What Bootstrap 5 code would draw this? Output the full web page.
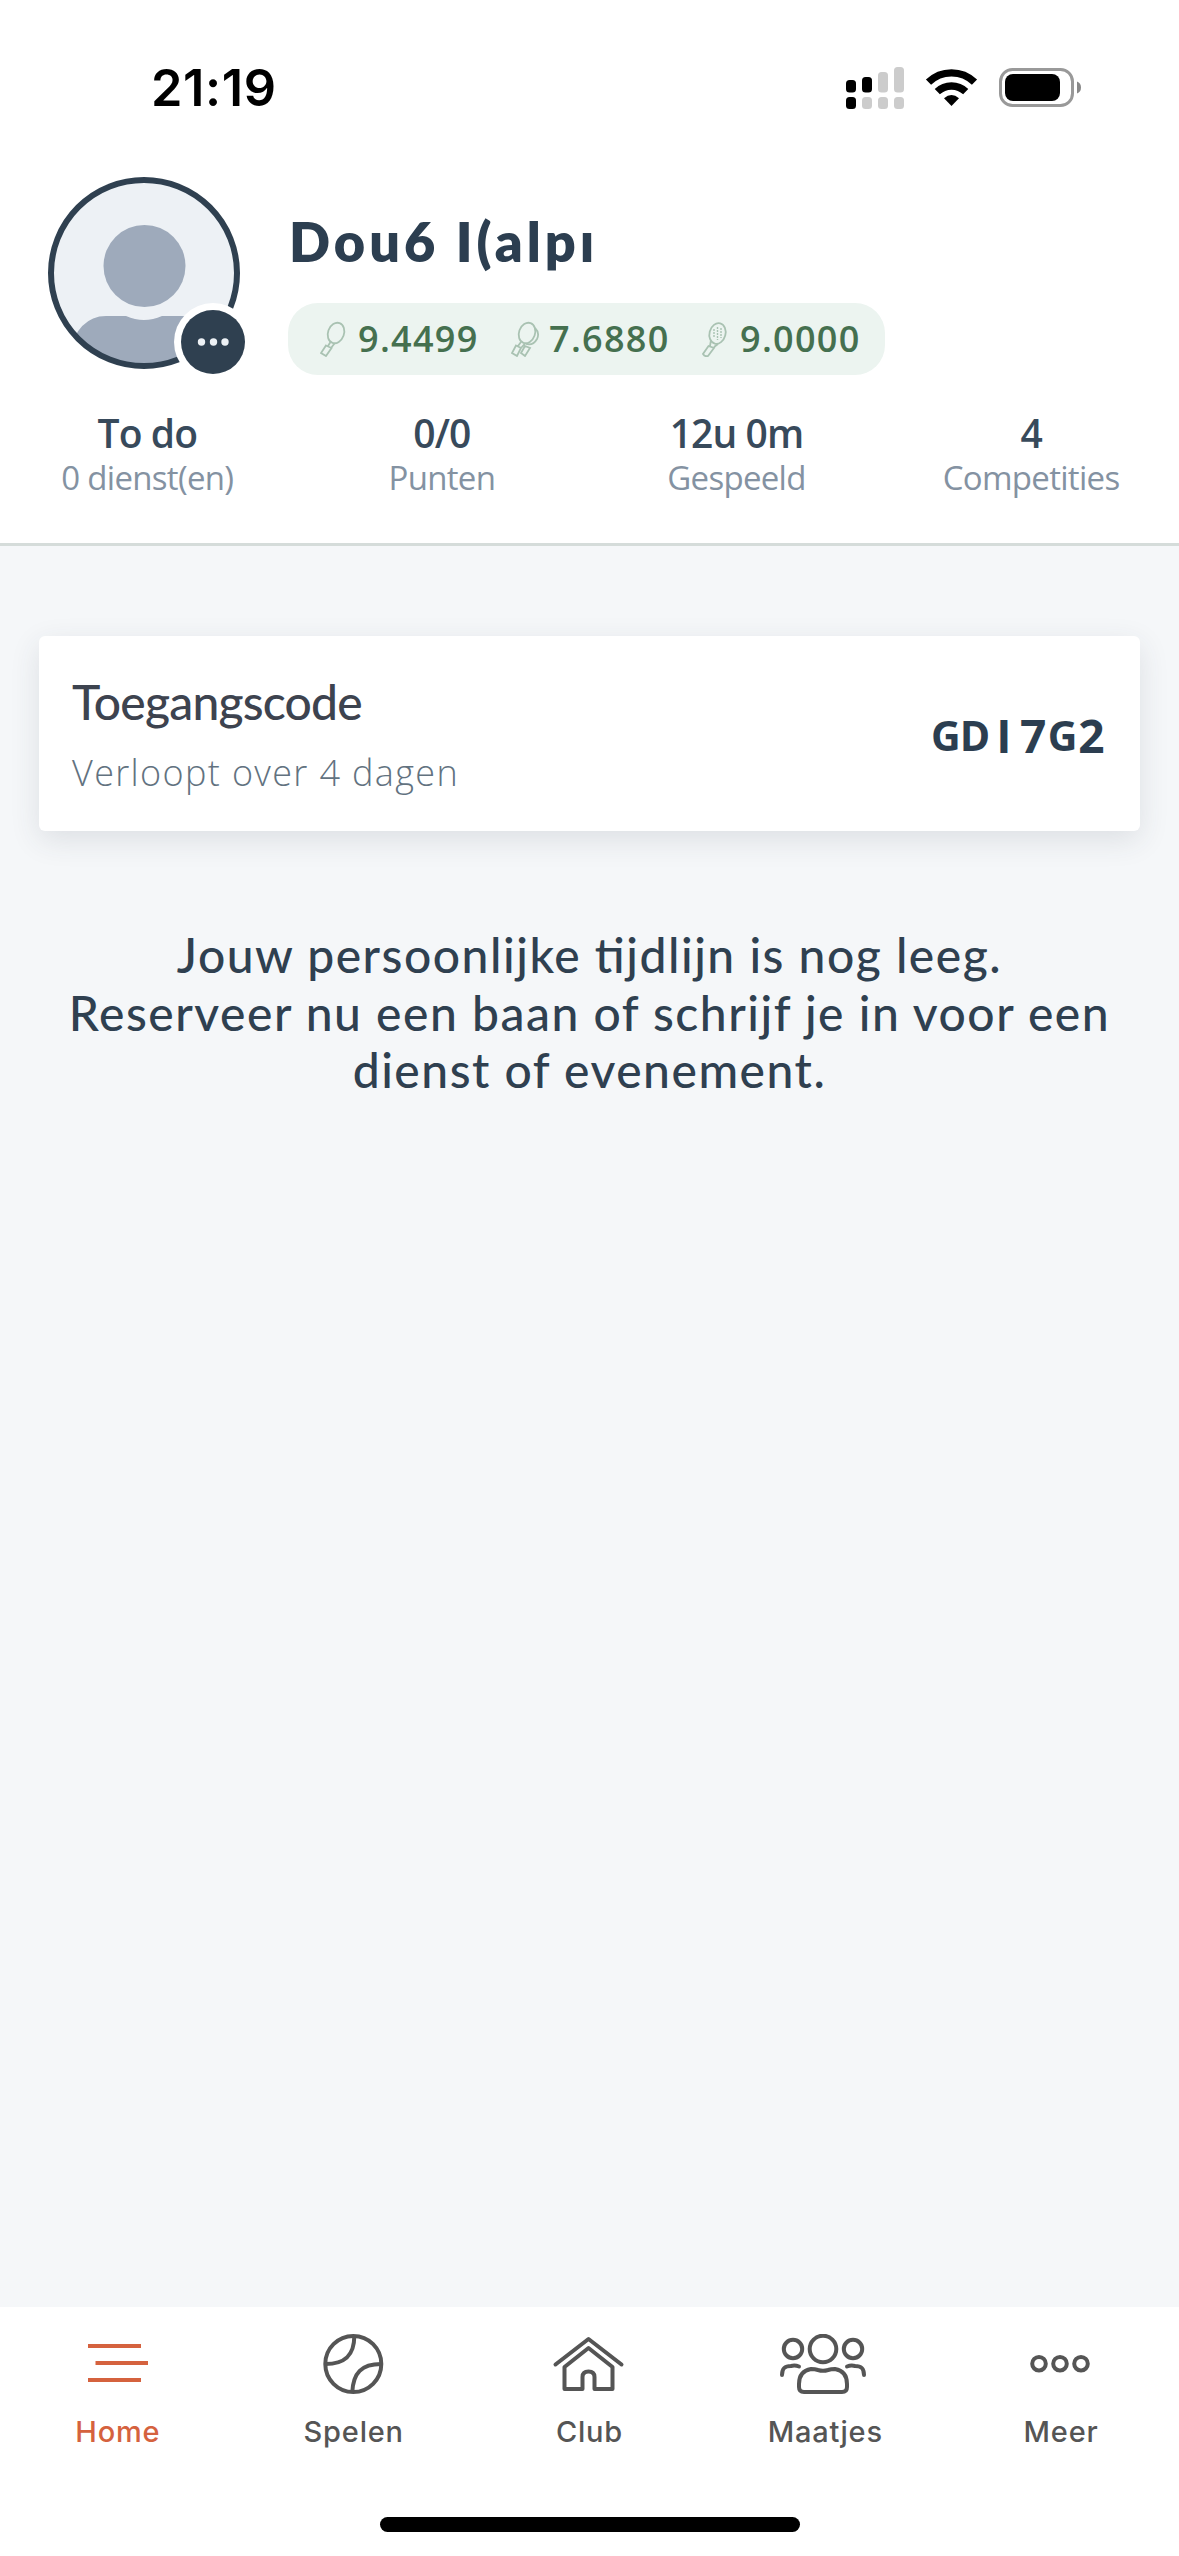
<!DOCTYPE html>
<html lang="nl">
<head>
<meta charset="utf-8">
<meta name="viewport" content="width=device-width, initial-scale=1">
<title>Home</title>
<link href="https://cdn.jsdelivr.net/npm/bootstrap@5.3.0/dist/css/bootstrap.min.css" rel="stylesheet">
<style>
  body { background:#f5f7f9; font-family:"Open Sans",sans-serif; color:#34495e; }
  .screen { width:1179px; height:2556px; overflow:hidden; }
  .status-bar { height:176px; padding:0 97px 0 151px; color:#000; }
  .clock { font:600 50.5px/60px Inter,sans-serif; letter-spacing:.6px; }
  .profile { height:546px; border-bottom:3px solid #d5dcda; }
  .who { padding:1px 48px 0; gap:48px; height:234px; }
  .avatar { width:192px; height:192px; }
  .more-dot { left:126px; top:126px; width:78px; height:78px; }
  .player { font:800 54px/60px Lato,sans-serif; color:#2c3e50; padding:35px 0 0 1px; height:126px; white-space:nowrap; letter-spacing:4px; }
  .ratings { height:72px; width:597px; border-radius:30px; background:#ecf4f0; color:#45704f; font-size:36px; font-weight:600; letter-spacing:1.3px; line-height:72px; padding-left:32px; }
  .rating { width:191px; gap:9px; flex:none; }
  .rating svg { width:29px; height:36px; flex:none; stroke:#a9c2b2; fill:none; stroke-width:1.8; }
  .stat { width:294.6px; text-align:center; }
  .stats b { display:block; font-weight:600; font-size:39px; line-height:46px; letter-spacing:-.9px; color:#384a5b; }
  .stats span { display:block; font-size:33px; line-height:44px; color:#8492a2; letter-spacing:-.7px; }
  .access { margin:90px 39px 0; height:195px; border:0; border-radius:6px; box-shadow:0 9px 30px rgba(50,55,70,.12); padding:2px 34px 0 33px; }
  .access h2 { font:500 48px/58px Lato,sans-serif; color:#3d434f; margin:0 0 18px; letter-spacing:-.8px; }
  .access p { font-size:36px; font-weight:300; line-height:48px; letter-spacing:1.35px; color:#62727f; margin:0; }
  .code { font-size:46px; font-weight:700; line-height:50px; color:#2c3e50; }
  .code span { width:29.2px; text-align:center; }
  .code .slim { font-family:"Noto Sans","Open Sans",sans-serif; font-size:41px; }
  .empty { margin-top:95px; font:500 48px/57.6px Lato,sans-serif; color:#2f4050; letter-spacing:1.52px; text-align:center; }
  .lig { letter-spacing:0; margin-right:1.5px; }
  .tabs { height:249px; background:#fff; }
  .tab { width:235.8px; padding-top:27px; color:#555; text-decoration:none; font:500 29px/40px Inter,sans-serif; letter-spacing:.8px; gap:18px; }
  .tab.on { color:#d5623e; }
  .tab svg { height:60px; width:90px; fill:none; stroke:currentColor; stroke-width:4; }
  .home-bar { width:420px; height:15px; border-radius:8px; background:#000; margin:65px auto 0; }
</style>
</head>
<body>
<div class="screen d-flex flex-column">
  <header class="profile bg-white flex-shrink-0">
    <div class="status-bar d-flex align-items-center justify-content-between">
      <div class="clock">21:19</div>
      <svg width="236" height="44" viewBox="846 66 236 44">
        <g fill="#000"><rect x="846" y="80" width="10" height="12.5" rx="3.5"/><rect x="862" y="77" width="10" height="15.500" rx="3.500"/><rect x="846" y="97" width="10" height="12" rx="3.500"/></g>
        <g fill="#ccc"><rect x="878" y="72" width="10" height="20.500" rx="3.500"/><rect x="894" y="67" width="10" height="25.500" rx="3.500"/><rect x="862" y="97" width="10" height="12" rx="3.500"/><rect x="878" y="97" width="10" height="12" rx="3.500"/><rect x="894" y="97" width="10" height="12" rx="3.500"/></g>
        <g fill="none" stroke="#000" stroke-width="7.400"><path d="M928.500 82.200a33 33 0 0 1 46 0"/><path d="M937.300 91.700a20.500 20.500 0 0 1 28.400 0"/></g>
        <path d="M944 98.300q7.500-6.400 15 0L951.500 106z"/>
        <rect x="1000.500" y="69.500" width="72" height="36" rx="12" fill="none" stroke="#999" stroke-width="3"/>
        <rect x="1005" y="74" width="55" height="27" rx="8"/>
        <path d="M1077 81.500q4 1.500 4 6t-4 6z" fill="#888"/>
      </svg>
    </div>
    <div class="who d-flex">
      <div class="avatar position-relative flex-shrink-0">
        <svg width="192" height="192" viewBox="0 0 192 192">
          <defs><clipPath id="face"><circle cx="96" cy="96" r="92"/></clipPath></defs>
          <circle cx="96" cy="96" r="93" fill="#edf1f5"/>
          <g clip-path="url(#face)"><path d="M20 192V178Q30 139 58 139H78Q96 147 114 139H134Q162 139 172 178V192z" fill="#9eaabb"/></g>
          <circle cx="96.500" cy="89" r="41" fill="#9eaabb"/>
          <circle cx="96" cy="96" r="93" fill="none" stroke="#2f4050" stroke-width="6"/>
        </svg>
        <svg class="more-dot position-absolute" viewBox="0 0 78 78"><circle cx="39" cy="39" r="39" fill="#fff"/><circle cx="39" cy="39" r="32" fill="#2f4050"/><g fill="#edf1f5"><circle cx="27.500" cy="39" r="3.700"/><circle cx="39.500" cy="39" r="3.700"/><circle cx="51" cy="39" r="3.700"/></g></svg>
      </div>
      <div>
        <div class="player">Dou6 I(alpı</div>
        <div class="ratings d-flex">
          <div class="rating d-flex align-items-center"><svg viewBox="0 0 29 36"><ellipse cx="16" cy="12" rx="8" ry="10.500" transform="rotate(20 16 12)"/><path d="M10.500 21L8 25M14.500 22.500L11 27M6 24.500L11.500 27L6 35L1 32z"/></svg>9.4499</div>
          <div class="rating d-flex align-items-center"><svg viewBox="0 0 29 36"><ellipse cx="16" cy="12" rx="8" ry="10.500" transform="rotate(20 16 12)"/><path d="M24 7Q29 12 26 18Q22 25 15 23M10 21L7 25M14 22.500L10 27M5 24.500L10 27L6 35L1 32zM14 25L19 27L14 35L10 32z"/></svg>7.6880</div>
          <div class="rating d-flex align-items-center"><svg viewBox="0 0 29 36"><ellipse cx="15.500" cy="12.500" rx="8" ry="10.500" transform="rotate(15 15.500 12.500)"/><path d="M9 19L8 25M16 23L12 26M6.500 25L12 27L6 35Q3 36 1 33z"/><path d="M12 8v9M15.500 6v13M19 7v10" stroke-width="1.400" stroke-dasharray="2 1"/></svg>9.0000</div>
        </div>
      </div>
    </div>
    <div class="stats d-flex">
      <div class="stat"><b>To do</b><span>0 dienst(en)</span></div>
      <div class="stat"><b>0/0</b><span>Punten</span></div>
      <div class="stat"><b>12u 0m</b><span>Gespeeld</span></div>
      <div class="stat"><b>4</b><span>Competities</span></div>
    </div>
  </header>

  <main class="flex-grow-1">
    <section class="access card flex-row align-items-center justify-content-between">
      <div><h2>Toegangscode</h2><p>Verloopt over 4 dagen</p></div>
      <div class="code d-flex align-items-center"><span class="slim">G</span><span class="slim">D</span><span>I</span><span>7</span><span class="slim">G</span><span>2</span></div>
    </section>
    <div class="empty">Jouw persoonlijke <span class="lig">ti</span>jdlijn is nog leeg.<br>Reserveer nu een baan of schrijf je in voor een<br>dienst of evenement.</div>
  </main>

  <nav class="tabs flex-shrink-0">
    <div class="d-flex">
      <a class="tab on d-flex flex-column align-items-center" href="#"><svg viewBox="73 2334 90 60"><path d="M88 2346h53M95.500 2363h52.500M88 2380h53"/></svg>Home</a>
      <a class="tab d-flex flex-column align-items-center" href="#"><svg viewBox="308.700 2334 90 60"><circle cx="353" cy="2364" r="28"/><path d="M354 2336C354 2355 345 2364 325 2364M352 2392C353 2373 361 2364 381 2364"/></svg>Spelen</a>
      <a class="tab d-flex flex-column align-items-center" href="#"><svg viewBox="544.500 2334 90 60"><path d="M556 2364.500L589 2339L622 2364.500" stroke-linecap="round" stroke-linejoin="round"/><path d="M565 2389V2367L589 2348L613 2367V2389H595V2377Q595 2371.500 589 2371.500T583 2377V2389z" stroke-linejoin="round"/></svg>Club</a>
      <a class="tab d-flex flex-column align-items-center" href="#"><svg viewBox="780 2334 90 60"><circle cx="823" cy="2349" r="13.300"/><circle cx="793" cy="2349" r="9.200"/><circle cx="853" cy="2349" r="9.200"/><path d="M782 2375C782 2368 785 2366 791 2366Q795 2365 799 2366.500M864 2375C864 2368 861 2366 855 2366Q851 2365 847 2366.500" stroke-linecap="round"/><path d="M811 2369Q815 2369 818 2370Q823 2371.500 828 2370Q831 2369 835 2369Q847 2371 847 2384V2387Q847 2392 842 2392H804Q799 2392 799 2387V2384Q799 2371 811 2369z"/></svg>Maatjes</a>
      <a class="tab d-flex flex-column align-items-center" href="#"><svg viewBox="1016 2334 90 60"><circle cx="1039" cy="2363.700" r="6.800"/><circle cx="1060" cy="2363.700" r="6.800"/><circle cx="1081" cy="2363.700" r="6.800"/></svg>Meer</a>
    </div>
    <div class="home-bar"></div>
  </nav>
</div>
<script src="https://cdn.jsdelivr.net/npm/bootstrap@5.3.0/dist/js/bootstrap.bundle.min.js"></script>
</body>
</html>
